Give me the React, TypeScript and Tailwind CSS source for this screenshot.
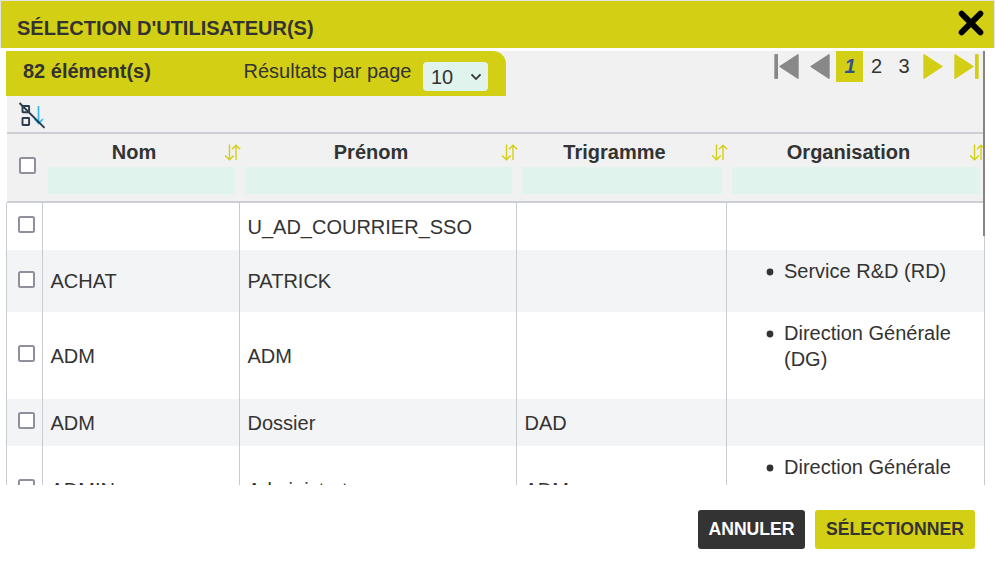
import React from "react";

const columns = [
  { label: "Nom", filter: "w-[187px]" },
  { label: "Prénom", filter: "w-[267px]" },
  { label: "Trigramme", filter: "w-[200px]" },
  { label: "Organisation", filter: "w-[248px]" },
];

const rows = [
  { nom: "", prenom: "U_AD_COURRIER_SSO", tri: "", org: "", style: "h-[47px] bg-white" },
  { nom: "ACHAT", prenom: "PATRICK", tri: "", org: "Service R&D (RD)", style: "h-[62px] bg-[#f3f4f6]" },
  { nom: "ADM", prenom: "ADM", tri: "", org: "Direction Générale (DG)", style: "h-[87px] bg-white" },
  { nom: "ADM", prenom: "Dossier", tri: "DAD", org: "", style: "h-[47px] bg-[#f3f4f6]" },
  { nom: "ADMIN", prenom: "Administrateur", tri: "ADM", org: "Direction Générale (DG)", style: "h-[87px] bg-white" },
];

const grid = "grid grid-cols-[36px_197px_277px_210px_258px]";
const textCell = "flex items-center border-r border-[#c9cbd2] pl-[7.5px]";

function Checkbox() {
  return (
    <input
      type="checkbox"
      className="block size-[17px] shrink-0 appearance-none rounded-[2.5px] border-2 border-[#8f8f9d] bg-white"
    />
  );
}

function SortIcon() {
  return (
    <svg width="17" height="17" viewBox="0 0 17 17" fill="none" stroke="#d3cf14" strokeWidth="1.4" className="shrink-0">
      <path d="M5.5 0.5V15.7M1 11.5L5.5 15.7L9.8 11.5M12 16V1.3M8 5.2L12 1.3L16.2 5.2" />
    </svg>
  );
}

function ResetSortIcon() {
  return (
    <svg width="28" height="28" viewBox="0 0 28 28" fill="none" className="shrink-0">
      <path d="M20.5 4V21M16.5 17L20.5 21.5L25 17" stroke="#35b8f5" strokeWidth="1.7" />
      <rect x="4.5" y="4" width="6.6" height="6.2" rx="0.5" stroke="#2b3c4e" strokeWidth="1.9" />
      <rect x="4.5" y="16" width="6.6" height="7" rx="0.5" stroke="#2b3c4e" strokeWidth="1.9" />
      <path d="M1.5 1L26.5 25.8" stroke="#2b3c4e" strokeWidth="1.9" />
    </svg>
  );
}

function PageArrow({ shape, color }: { shape: string; color: string }) {
  return (
    <path d={shape} fill={color} stroke={color} strokeWidth="1.4" strokeLinejoin="round" />
  );
}

function Pagination() {
  return (
    <div className="flex h-[31px] text-[20px] leading-[31px]">
      <svg width="62" height="31" viewBox="0 0 62 31">
        <rect x="0.3" y="3" width="3.7" height="25" rx="1" fill="#888" />
        <PageArrow shape="M24 3.8V27.2L6 15.5Z" color="#888" />
        <PageArrow shape="M55 3.8V27.2L37 15.5Z" color="#888" />
      </svg>
      <span className="w-[27px] bg-[#d3cf14] pl-px text-center font-bold italic text-[#34508c]">1</span>
      <span className="w-[27px] text-center">2</span>
      <span className="w-[28px] text-center">3</span>
      <svg width="62" height="31" viewBox="0 0 62 31">
        <PageArrow shape="M6 3.8V27.2L24 15.5Z" color="#d3cf14" />
        <PageArrow shape="M37 3.8V27.2L55 15.5Z" color="#d3cf14" />
        <rect x="57" y="3" width="3.7" height="25" rx="1" fill="#d3cf14" />
      </svg>
    </div>
  );
}

export default function App() {
  return (
    <div className="flex h-[561px] w-[995px] flex-col overflow-hidden bg-white font-['Liberation_Sans',Arial,sans-serif] text-[20px] text-[#333]">
      <header className="flex h-12 shrink-0 items-center justify-between border-x border-t border-[#e4e4e4] bg-[#d3cf14] pr-2.5 pl-4">
        <h1 className="pt-[7px] text-[20px] leading-6 font-bold">SÉLECTION D'UTILISATEUR(S)</h1>
        <svg width="26" height="26" viewBox="0 0 26 26" className="mb-[3px] shrink-0">
          <path d="M3.6 3.6L22.4 22.4M22.4 3.6L3.6 22.4" stroke="black" strokeWidth="5.8" strokeLinecap="round" />
        </svg>
      </header>

      <main className="relative mt-[3px] ml-1.5 h-[434px] w-[979px] shrink-0 overflow-hidden">
        <div className="ml-px flex h-[81px] flex-col bg-[#f1f1f1]">
          <div className="-ml-px flex h-[45px] justify-between">
            <div className="flex w-[500px] rounded-tr-[13px] bg-[#d3cf14]">
              <b className="w-[237.5px] pl-[17px] leading-10">82 élément(s)</b>
              <span className="w-[179.5px] whitespace-nowrap leading-10">Résultats par page</span>
              <div className="mt-[11px] flex h-[29px] w-[65px] items-center justify-between rounded-[4px] bg-[#e1f3ed] pr-1.5 pl-2">
                <span>10</span>
                <svg width="12" height="9" viewBox="0 0 12 9" fill="none">
                  <path d="M1.5 2.3L6 7L10.5 2.3" stroke="#333" strokeWidth="1.8" />
                </svg>
              </div>
            </div>
            <div className="pr-[5px]">
              <Pagination />
            </div>
          </div>
          <div className="pt-[6px] pl-[11px]">
            <ResetSortIcon />
          </div>
        </div>

        <div className={`${grid} ml-px h-[71px] border-y-2 border-[#cbcfd5] bg-[#f1f1f1]`}>
          <div className="pt-[23px] pl-3">
            <Checkbox />
          </div>
          {columns.map((c) => (
            <div key={c.label} className="pl-[5px]">
              <div className="flex h-[33px] items-start pt-[6px]">
                <b className={`${c.filter} shrink-0 pr-[15px] text-center leading-6`}>{c.label}</b>
                <div className="-ml-[11px] pt-[4px]">
                  <SortIcon />
                </div>
              </div>
              <div className={`${c.filter} h-[27px] bg-[#e1f3ed]`} />
            </div>
          ))}
        </div>

        <div className="border-x border-[#c9cbd2]">
          {rows.map((r, i) => (
            <div key={i} className={`${grid} ${r.style} leading-[26px]`}>
              <div className="flex items-center border-r border-[#c9cbd2] pb-1 pl-[11px]">
                <Checkbox />
              </div>
              <div className={textCell}>{r.nom}</div>
              <div className={textCell}>{r.prenom}</div>
              <div className={textCell}>{r.tri}</div>
              <div className="pt-2 pl-[57px]">
                {r.org && (
                  <ul>
                    <li className="flex">
                      <svg width="8" height="8" viewBox="0 0 8 8" className="mt-2.5 mr-2.5 -ml-[18px] shrink-0">
                        <circle cx="4" cy="4" r="3.4" fill="#333" />
                      </svg>
                      <span>{r.org}</span>
                    </li>
                  </ul>
                )}
              </div>
            </div>
          ))}
        </div>
        <div className="absolute top-0 right-0 h-[185px] w-0.5 bg-[#858585]" />
      </main>

      <footer className="mt-[25px] flex h-[39px] justify-end gap-2.5 pr-5 text-[17.6px] font-bold">
        <button className="w-[107px] rounded-[3px] bg-[#333] text-white">ANNULER</button>
        <button className="w-40 rounded-[3px] bg-[#d3cf14]">SÉLECTIONNER</button>
      </footer>
    </div>
  );
}
